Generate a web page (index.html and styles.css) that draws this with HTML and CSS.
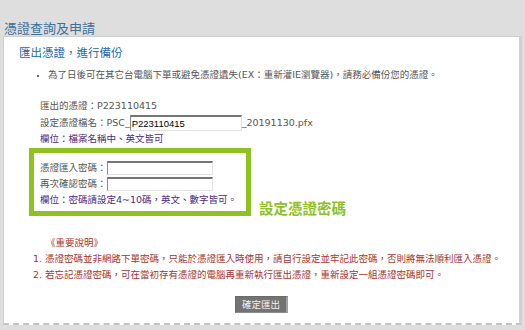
FILE: index.html
```html
<!DOCTYPE html>
<html lang="zh-Hant">
<head>
<meta charset="utf-8">
<title>憑證查詢及申請</title>
<link rel="stylesheet" href="styles.css">
</head>
<body>
<h1 class="page-title">憑證查詢及申請</h1>
<div class="panel">
  <h2 class="sub-title">匯出憑證，進行備份</h2>
  <ul class="notes">
    <li>為了日後可在其它台電腦下單或避免憑證遺失(EX：重新灌IE瀏覽器)，請務必備份您的憑證。</li>
  </ul>
  <div class="fields">
    <div class="row">匯出的憑證：P223110415</div>
    <div class="row row-input">設定憑證檔名：PSC_<input class="txt txt-file" type="text" value="P223110415">_20191130.pfx</div>
    <div class="row hint">欄位：檔案名稱中、英文皆可</div>
  </div>
  <div class="pw-wrap">
    <div class="pw-box">
      <div class="row">憑證匯入密碼：<input class="txt txt-pw" type="password"></div>
      <div class="row">再次確認密碼：<input class="txt txt-pw" type="password"></div>
      <div class="row hint">欄位：密碼請設定4~10碼，英文、數字皆可。</div>
    </div>
    <div class="pw-label">設定憑證密碼</div>
  </div>
  <div class="important">
    <div class="imp-title">《重要說明》</div>
    <div class="imp-item"><span class="num">1.</span><span>憑證密碼並非網路下單密碼，只能於憑證匯入時使用，請自行設定並牢記此密碼，否則將無法順利匯入憑證。</span></div>
    <div class="imp-item"><span class="num">2.</span><span>若忘記憑證密碼，可在當初存有憑證的電腦再重新執行匯出憑證，重新設定一組憑證密碼即可。</span></div>
  </div>
  <div class="actions">
    <button class="btn" type="button">確定匯出</button>
  </div>
</div>
</body>
</html>
```

FILE: styles.css
```css
html, body {
  margin: 0;
  padding: 0;
}
body {
  background: #dedede;
  font-family: "DejaVu Sans", "Noto Sans CJK TC", sans-serif;
  font-size: 9.5px;
  color: #555;
}
.page-title {
  margin: 0;
  padding: 20px 0 0 4px;
  height: 16px;
  line-height: 16px;
  font-size: 13px;
  font-weight: normal;
  color: #3d6f98;
  font-family: "Noto Sans CJK TC", sans-serif;
}
.panel {
  margin: 0 3px 0 3px;
  background: #fff;
  border: 1px solid #cfcfcf;
  border-right: 3px solid #d2d2d2;
  border-bottom: 2px dashed #c4c4c4;
  padding: 7px 0 10px 0;
}
.sub-title {
  margin: 0 0 0 15px;
  font-size: 11.5px;
  line-height: 16px;
  font-weight: normal;
  color: #2468a4;
  font-family: "Noto Sans CJK TC", sans-serif;
}
.notes {
  margin: 7px 0 0 0;
  padding: 0 0 0 44px;
  line-height: 16px;
  list-style: disc;
}
.notes li::marker {
  color: #333;
  font-size: 8px;
}
.fields {
  margin: 15px 0 0 36px;
}
.row {
  height: 16px;
  line-height: 16px;
  display: flex;
  align-items: center;
  white-space: nowrap;
}
.row-input {
  height: 17px;
}
.hint {
  color: #4a2b82;
}
.txt {
  box-sizing: border-box;
  margin: 0;
  padding: 0 1px;
  background: #fff;
  border-style: solid;
  border-width: 2px 1px 1px 1px;
  border-color: #767676 #e2e2e2 #e2e2e2 #8a8a8a;
  font-family: "Liberation Sans", sans-serif;
  font-size: 9.5px;
  color: #000;
  outline: none;
}
.txt-file {
  width: 112px;
  height: 16px;
}
.txt-pw {
  width: 106px;
  height: 14px;
}
.pw-wrap {
  display: flex;
  align-items: flex-end;
  margin: 1px 0 0 25px;
}
.pw-box {
  box-sizing: border-box;
  width: 222px;
  border: 5px solid #8dc21f;
  padding: 7px 0 3px 6px;
}
.pw-label {
  margin: 0 0 0 8px;
  font-family: "Noto Sans CJK TC", sans-serif;
  font-size: 14.5px;
  line-height: 16px;
  font-weight: bold;
  color: #8dc21f;
}
.important {
  margin: 19px 0 0 0;
  color: #a8342b;
  line-height: 16px;
}
.imp-title {
  margin-left: 42px;
}
.imp-item {
  display: flex;
  margin-left: 29px;
  white-space: nowrap;
}
.num {
  width: 12px;
}
.actions {
  margin-top: 13px;
  display: flex;
  justify-content: center;
}
.btn {
  box-sizing: border-box;
  height: 17px;
  width: 53px;
  margin: 0;
  padding: 0;
  background: #737373;
  color: #f4f4f4;
  border: 1px solid #6a6a6a;
  border-right: 2px solid #a0a0a0;
  border-bottom: 1px solid #8c8c8c;
  font-family: "Noto Sans CJK TC", sans-serif;
  font-size: 9.5px;
  line-height: 15px;
  border-radius: 0;
}
```
